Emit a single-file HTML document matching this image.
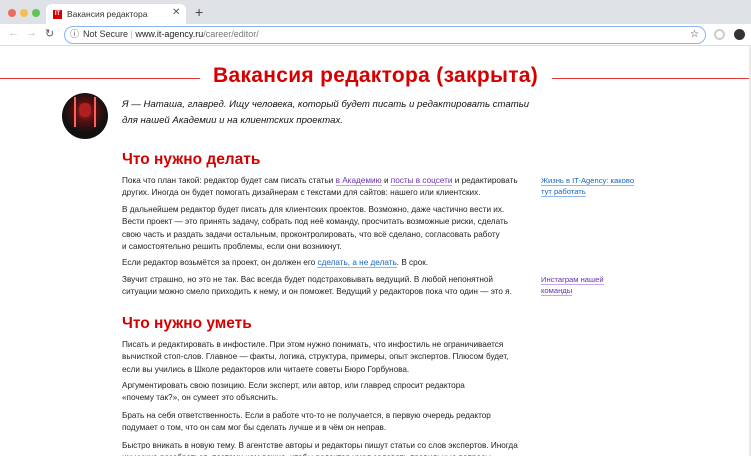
<!DOCTYPE html>
<html><head><meta charset="utf-8"><style>
*{margin:0;padding:0;box-sizing:border-box}
html,body{width:751px;height:456px;overflow:hidden}
body{background:#fff;font-family:"Liberation Sans",sans-serif;position:relative;color:#222}
.tabbar{position:absolute;left:0;top:0;width:751px;height:24px;background:#dee1e6}
.dot{position:absolute;top:9px;width:8px;height:8px;border-radius:50%}
.tab{position:absolute;left:46px;top:4px;width:140px;height:21px;background:#fff;border-radius:6px 6px 0 0}
.toolbar{position:absolute;left:0;top:24px;width:751px;height:22px;background:#fff;border-bottom:1px solid #ddd}
.url{position:absolute;left:64px;top:2px;width:642px;height:18px;border:1.5px solid #8ab4f8;border-radius:9px;font-size:9px;line-height:15px;padding-left:18px;color:#333}
.hr{position:absolute;top:78px;height:1px;background:#e53935}
h1{position:absolute;left:213px;top:64px;font-size:21px;color:#d50000;font-weight:bold;letter-spacing:.3px}
.av{position:absolute;left:62px;top:93px;width:46px;height:46px;border-radius:50%;background:radial-gradient(circle at 50% 40%,#a02020 0,#501010 30%,#111 60%);overflow:hidden}
.intro{position:absolute;left:122px;top:97px;font-size:9.6px;line-height:16px;font-style:italic;color:#111;white-space:nowrap}
h2{position:absolute;left:122px;font-size:15.5px;color:#d50000;font-weight:bold}
.p{position:absolute;left:122px;font-size:8.2px;line-height:12.3px;color:#222;white-space:nowrap}
a{color:#6a2fb0;text-decoration:none;border-bottom:1px solid #c4a8e6}
a.b{color:#1565c0;border-color:#90b8e8}
.side{position:absolute;left:541px;font-size:7.6px;line-height:10.5px;white-space:nowrap}
</style></head><body>
<div class="tabbar">
<div class="dot" style="left:8px;background:#ed6a5e"></div>
<div class="dot" style="left:20px;background:#f5bf4f"></div>
<div class="dot" style="left:32px;background:#61c554"></div>
<div class="tab"><div style="position:absolute;left:7px;top:6px;width:9px;height:9px;background:#d50000;color:#fff;font-size:6px;font-weight:bold;line-height:9px;text-align:center">IT</div><span style="position:absolute;left:21px;top:5px;font-size:8.5px;color:#333">Вакансия редактора</span><span style="position:absolute;left:126px;top:3px;font-size:10px;color:#555">✕</span></div>
<span style="position:absolute;left:195px;top:4px;font-size:14px;color:#444">+</span>
</div>
<div class="toolbar">
<span style="position:absolute;left:8px;top:3px;font-size:11px;color:#bbb">←</span>
<span style="position:absolute;left:26px;top:3px;font-size:11px;color:#bbb">→</span>
<span style="position:absolute;left:45px;top:3px;font-size:11px;color:#555">↻</span>
<div class="url"><span style="position:absolute;left:5px;top:0;font-size:9px;color:#555">ⓘ</span>Not Secure <span style="color:#bbb">|</span> <b style="font-weight:normal;color:#222">www.it-agency.ru</b><span style="color:#777">/career/editor/</span><span style="position:absolute;right:6px;top:0;font-size:10px">☆</span></div>
<div style="position:absolute;left:714px;top:5px;width:11px;height:11px;border-radius:50%;border:2px solid #ccc"></div>
<div style="position:absolute;left:734px;top:5px;width:11px;height:11px;border-radius:50%;background:#333"></div>
</div>
<div class="hr" style="left:0;width:200px"></div>
<div class="hr" style="left:552px;width:199px"></div>
<h1>Вакансия редактора (закрыта)</h1>
<div class="av"><div style="position:absolute;left:12px;top:4px;width:2px;height:30px;background:#ff6060"></div><div style="position:absolute;left:32px;top:4px;width:2px;height:30px;background:#ff6060"></div><div style="position:absolute;left:17px;top:10px;width:12px;height:14px;border-radius:40%;background:#b02020"></div></div>
<div class="intro">Я — Наташа, главред. Ищу человека, который будет писать и редактировать статьи<br>для нашей Академии и на клиентских проектах.</div>
<h2 style="top:151px">Что нужно делать</h2>
<div class="p" style="top:175px">Пока что план такой: редактор будет сам писать статьи <a>в Академию</a> и <a>посты в соцсети</a> и редактировать<br>других. Иногда он будет помогать дизайнерам с текстами для сайтов: нашего или клиентских.</div>
<div class="p" style="top:204px">В дальнейшем редактор будет писать для клиентских проектов. Возможно, даже частично вести их.<br>Вести проект — это принять задачу, собрать под неё команду, просчитать возможные риски, сделать<br>свою часть и раздать задачи остальным, проконтролировать, что всё сделано, согласовать работу<br>и самостоятельно решить проблемы, если они возникнут.</div>
<div class="p" style="top:257px">Если редактор возьмётся за проект, он должен его <a class="b">сделать, а не делать</a>. В срок.</div>
<div class="p" style="top:274px">Звучит страшно, но это не так. Вас всегда будет подстраховывать ведущий. В любой непонятной<br>ситуации можно смело приходить к нему, и он поможет. Ведущий у редакторов пока что один — это я.</div>
<div class="side" style="top:176px"><a class="b">Жизнь в IT-Agency: каково</a><br><a class="b">тут работать</a></div>
<div class="side" style="top:275px"><a>Инстаграм нашей</a><br><a>команды</a></div>
<h2 style="top:315px">Что нужно уметь</h2>
<div class="p" style="top:339px">Писать и редактировать в инфостиле. При этом нужно понимать, что инфостиль не ограничивается<br>вычисткой стоп-слов. Главное — факты, логика, структура, примеры, опыт экспертов. Плюсом будет,<br>если вы учились в Школе редакторов или читаете советы Бюро Горбунова.</div>
<div class="p" style="top:380px">Аргументировать свою позицию. Если эксперт, или автор, или главред спросит редактора<br>«почему так?», он сумеет это объяснить.</div>
<div class="p" style="top:410px">Брать на себя ответственность. Если в работе что-то не получается, в первую очередь редактор<br>подумает о том, что он сам мог бы сделать лучше и в чём он неправ.</div>
<div class="p" style="top:440px">Быстро вникать в новую тему. В агентстве авторы и редакторы пишут статьи со слов экспертов. Иногда<br>им нужно разобраться, поэтому нам важно, чтобы редактор умел задавать правильные вопросы.</div>
<div style="position:absolute;right:0;top:46px;width:2px;height:410px;background:#e8e8e8"></div>
</body></html>
